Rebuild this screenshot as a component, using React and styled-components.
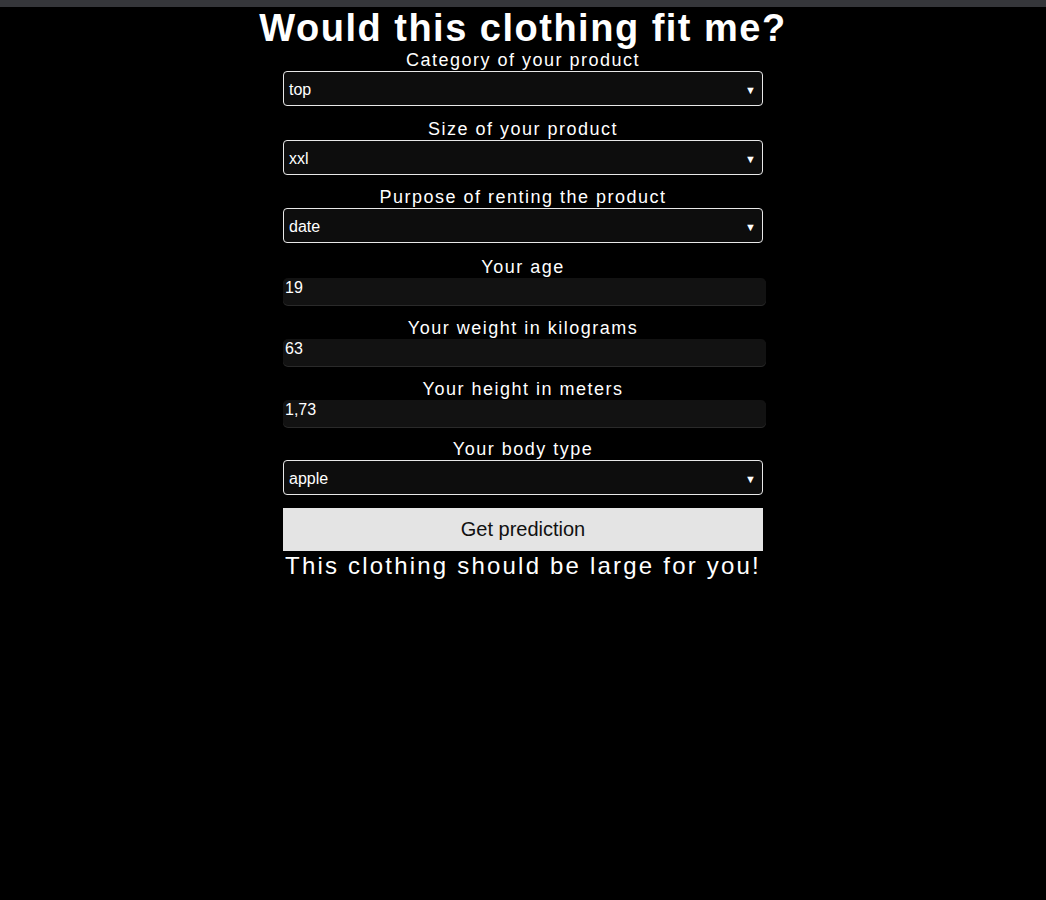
import React from "react";
import styled, { createGlobalStyle } from "styled-components";

const Global = createGlobalStyle`
  html, body { margin: 0; padding: 0; background: #000; }
  body { font-family: "Liberation Sans", Arial, sans-serif; color: #fff; min-height: 900px; }
`;

const TopBar = styled.div`
  height: 7px;
  background: #35363a;
`;

const Container = styled.div`
  width: 480px;
  margin: 0 auto;
  display: flex;
  flex-direction: column;
  align-items: stretch;
`;

const Title = styled.h1`
  margin: 0;
  height: 42px;
  font-size: 38px;
  line-height: 42px;
  font-weight: 700;
  letter-spacing: 1.5px;
  text-align: center;
  white-space: nowrap;
  display: flex;
  justify-content: center;
`;

const Group = styled.div`
  display: flex;
  flex-direction: column;
  margin-bottom: ${(p) => p.$gap}px;
`;

const Label = styled.label`
  height: 22px;
  line-height: 22px;
  font-size: 18px;
  letter-spacing: 1.5px;
  text-align: center;
`;

const SelectBox = styled.div`
  height: 35px;
  box-sizing: border-box;
  border: 1px solid #e8e8e8;
  border-radius: 4px;
  background: #0d0d0d;
  display: flex;
  align-items: center;
  padding: 2px 5px 0;
  font-size: 16px;
`;

const Arrow = styled.span`
  margin-left: auto;
  font-size: 11px;
  margin-right: 1px;
`;

const Input = styled.div`
  height: 27px;
  box-sizing: border-box;
  width: 483px;
  background: #121212;
  border-radius: 5px;
  box-shadow: 0 1px 0 #2a2a2a;
  padding: 1px 2px 0;
  font-size: 16px;
  line-height: 18px;
`;

const Button = styled.button`
  height: 43px;
  border: none;
  background: #e4e4e4;
  color: #111;
  font-family: "Liberation Sans", Arial, sans-serif;
  font-size: 20px;
  padding: 0;
  margin: 0;
`;

const Result = styled.div`
  height: 30px;
  line-height: 30px;
  font-size: 24px;
  letter-spacing: 2.2px;
  text-align: center;
  white-space: nowrap;
`;

const SelectField = ({ label, value, gap }) => (
  <Group $gap={gap}>
    <Label>{label}</Label>
    <SelectBox>
      {value}
      <Arrow>▼</Arrow>
    </SelectBox>
  </Group>
);

const InputField = ({ label, value, gap }) => (
  <Group $gap={gap}>
    <Label>{label}</Label>
    <Input>{value}</Input>
  </Group>
);

export default function App() {
  return (
    <>
      <Global />
      <TopBar />
      <Container>
        <Title>Would this clothing fit me?</Title>
        <SelectField label="Category of your product" value="top" gap={12} />
        <SelectField label="Size of your product" value="xxl" gap={11} />
        <SelectField label="Purpose of renting the product" value="date" gap={13} />
        <InputField label="Your age" value="19" gap={12} />
        <InputField label="Your weight in kilograms" value="63" gap={12} />
        <InputField label="Your height in meters" value="1,73" gap={11} />
        <SelectField label="Your body type" value="apple" gap={13} />
        <Button>Get prediction</Button>
        <Result>This clothing should be large for you!</Result>
      </Container>
    </>
  );
}
